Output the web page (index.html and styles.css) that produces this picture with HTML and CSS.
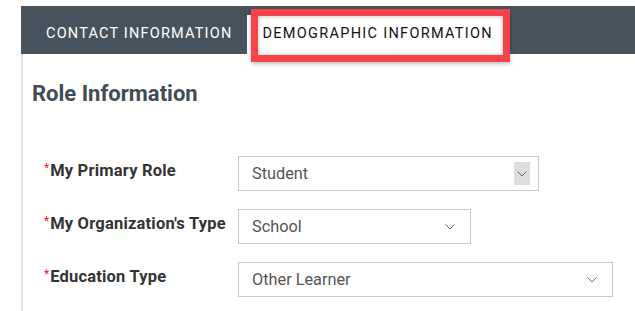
FILE: index.html
```html
<!DOCTYPE html>
<html>
<head>
<meta charset="utf-8">
<link rel="stylesheet" href="styles.css">
</head>
<body>
<div class="page">
  <div class="tabbar">
    <div class="tab">CONTACT INFORMATION</div>
    <div class="tab active">DEMOGRAPHIC INFORMATION<span class="highlight"></span></div>
  </div>
  <div class="panel">
    <h2 class="heading">Role Information</h2>
    <div class="form">
      <div class="row">
        <div class="label"><span class="req">*</span>My Primary Role</div>
        <div class="select w1"><span>Student</span><span class="arrow boxed"><svg width="10" height="6" viewBox="0 0 10 6"><path d="M0.5 0.5 L5 5 L9.5 0.5" fill="none" stroke="#666" stroke-width="1"/></svg></span></div>
      </div>
      <div class="row">
        <div class="label"><span class="req">*</span>My Organization's Type</div>
        <div class="select w2"><span>School</span><span class="arrow"><svg width="10" height="6" viewBox="0 0 10 6"><path d="M0.5 0.5 L5 5 L9.5 0.5" fill="none" stroke="#666" stroke-width="1"/></svg></span></div>
      </div>
      <div class="row">
        <div class="label"><span class="req">*</span>Education Type</div>
        <div class="select w3"><span>Other Learner</span><span class="arrow"><svg width="10" height="6" viewBox="0 0 10 6"><path d="M0.5 0.5 L5 5 L9.5 0.5" fill="none" stroke="#666" stroke-width="1"/></svg></span></div>
      </div>
    </div>
  </div>
</div>
</body>
</html>
```
FILE: styles.css
```css
* { box-sizing: border-box; }
html, body { margin: 0; padding: 0; background: #fff; }
body { font-family: Roboto, "Liberation Sans", sans-serif; }
.page { padding: 6px 0 0 21px; }
.tabbar {
  height: 48px;
  background: #46535d;
  display: flex;
  align-items: flex-end;
}
.tab {
  height: 48px;
  display: flex;
  align-items: center;
  padding: 9px 15px 0 25px;
  color: #fff;
  font-size: 14.5px;
  letter-spacing: 1.2px;
  line-height: 1;
}
.tab.active {
  position: relative;
  height: 39px;
  padding: 0 15px 0 15px;
  background: #fff;
  color: #111;
  letter-spacing: 1.3px;
}
.highlight {
  position: absolute;
  left: 4px;
  top: -6px;
  width: 259px;
  height: 53px;
  border: 7px solid #f5434a;
  box-shadow: 0 2px 4px rgba(0,0,0,0.25), inset 0 0 4px rgba(0,0,0,0.3);
}
.panel {
  border-left: 2px solid #e2e2e2;
  padding: 0 0 20px 9px;
}
.heading {
  margin: 0;
  padding-top: 27px;
  font-size: 22px;
  font-weight: 700;
  color: #414c55;
  line-height: 26px;
}
.form { padding-top: 49px; display: flex; flex-direction: column; gap: 18px; }
.row { display: flex; align-items: center; height: 35px; }
.label {
  width: 206px;
  padding-left: 12px;
  font-size: 16.5px;
  letter-spacing: 0.2px;
  font-weight: 700;
  color: #333;
  position: relative;
  top: -3px;
  white-space: nowrap;
}
.req { color: #e0252b; font-size: 12px; vertical-align: 4px; margin-right: 1px; font-weight: 400; letter-spacing: 0; }
.select {
  height: 35px;
  border: 1px solid #c9c9c9;
  display: flex;
  align-items: center;
  justify-content: space-between;
  padding: 0 9px 0 13px;
  font-size: 16.3px;
  color: #555;
}
.w1 { width: 301px; padding-right: 8px; }
.w2 { width: 233px; padding-right: 15px; }
.w3 { width: 375px; padding-right: 15px; }
.arrow { display: flex; align-items: center; justify-content: center; }
.arrow.boxed { width: 16px; height: 23px; background: #dedede; }
```
